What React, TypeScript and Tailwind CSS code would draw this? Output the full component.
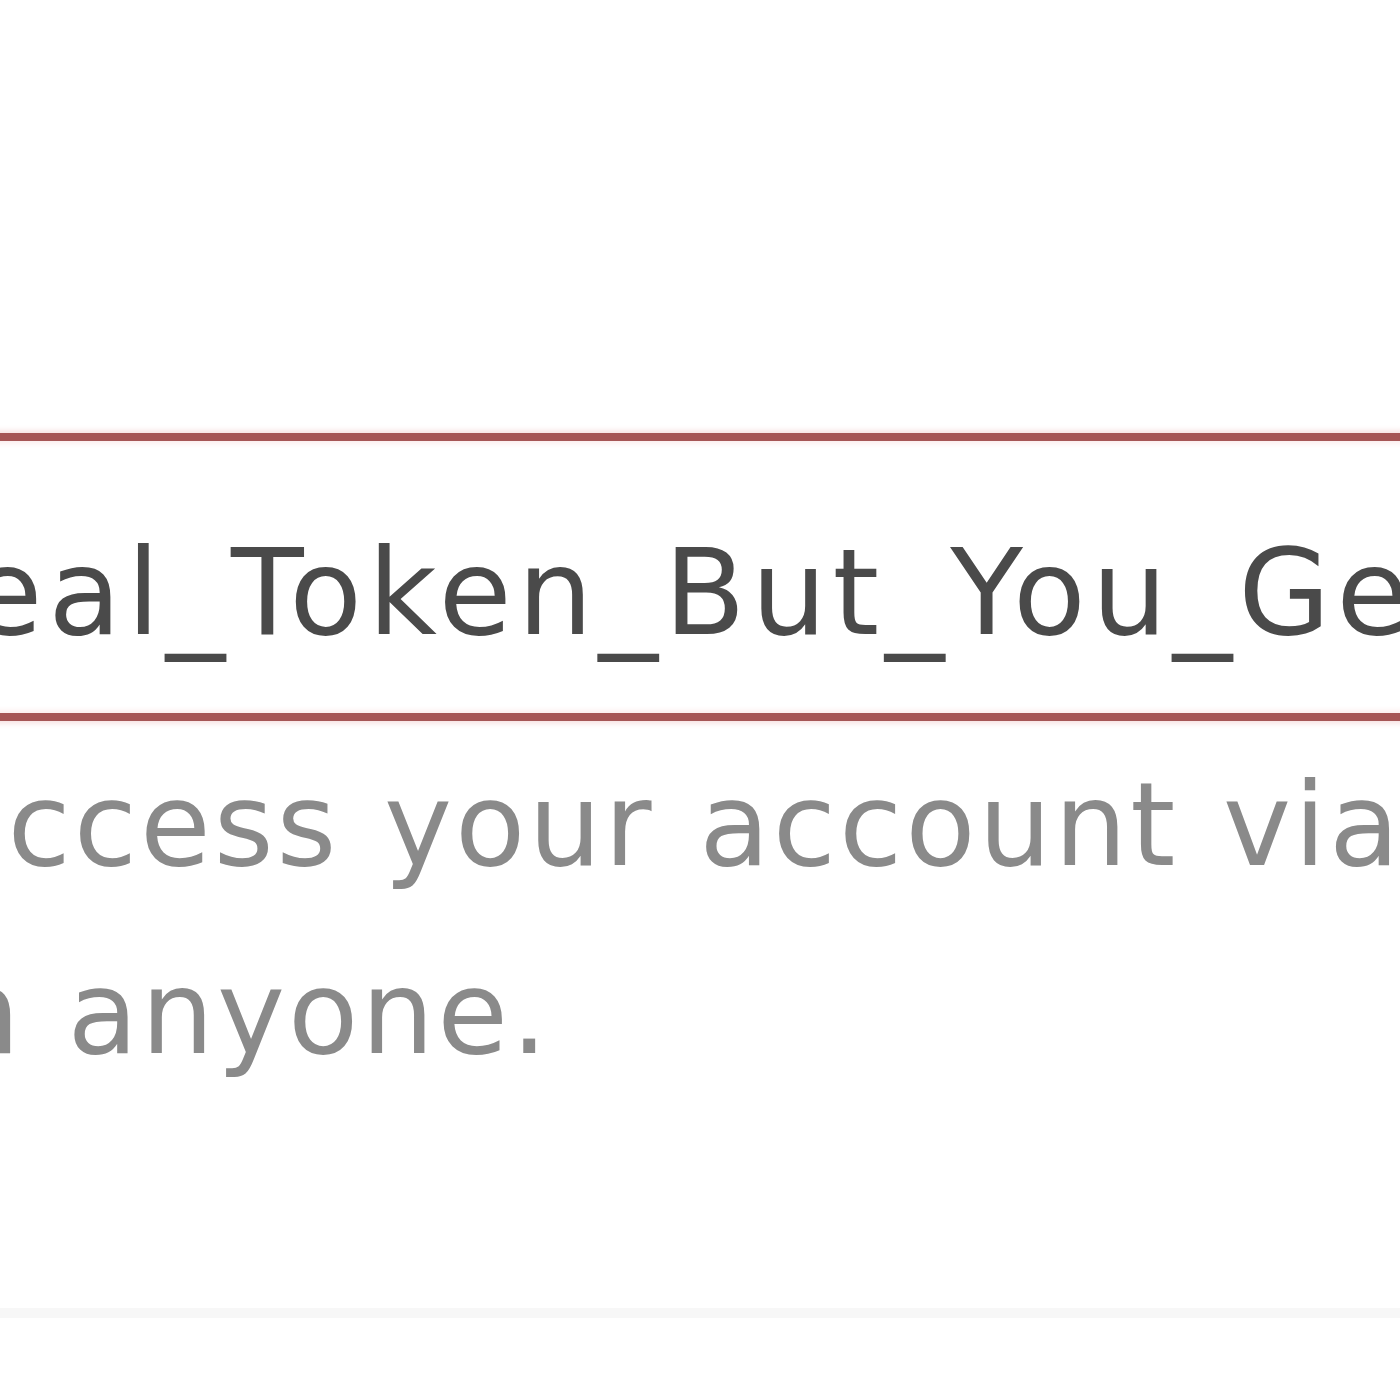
export default function App() {
  return (
    <div className="w-[1400px] h-[1400px] bg-white overflow-hidden font-['DejaVu_Sans',sans-serif]">
      <div className="pt-[433px]">
        {/* token field, wider than the view */}
        <div className="-mx-[60px] h-[288px] border-[8px] border-[#a65656] bg-white shadow-[0_0_6px_2px_#f6dede,inset_0_0_6px_2px_#fbeaea] overflow-hidden">
          <div className="pt-[93px] text-[119px] leading-none tracking-[5.8px] text-[#4a4a4a] whitespace-nowrap -ml-[62px]">
            Real_Token_But_You_Get
          </div>
        </div>

        {/* help text */}
        <div className="mt-[10px] text-[115px] leading-[188px] tracking-[3px] [word-spacing:5px] text-[#8a8a8a] whitespace-nowrap">
          <div className="-ml-[66px]">access your account via</div>
          <div className="-ml-[233px]">with anyone.</div>
        </div>

        <div className="mt-[201px] h-[10px] bg-[#f7f7f7]" />
      </div>
    </div>
  );
}
